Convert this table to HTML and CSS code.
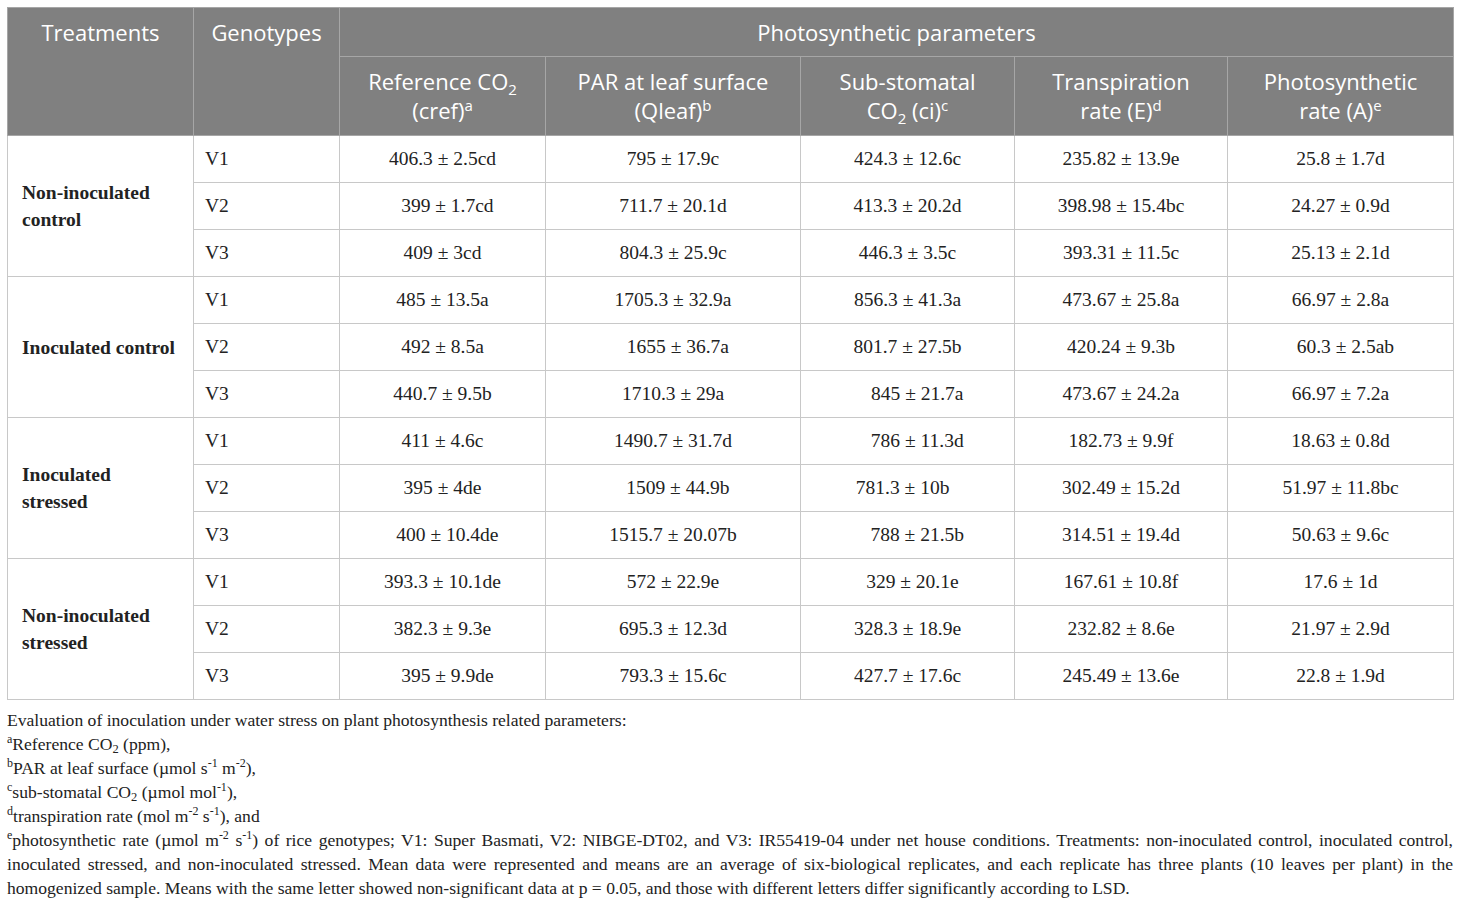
FILE: index.html
```html
<!DOCTYPE html>
<html lang="en">
<head>
    <meta charset="UTF-8">
    <title>Photosynthetic parameters</title>
    <link rel="stylesheet" href="styles.css">
</head>
<body>
    <div class="wrap">
        <table class="data-table">
            <colgroup>
                <col class="c-treat">
                <col class="c-geno">
                <col class="c-ref">
                <col class="c-par">
                <col class="c-sub">
                <col class="c-trans">
                <col class="c-photo">
            </colgroup>
            <thead>
                <tr class="head-top">
                    <th rowspan="2">Treatments</th>
                    <th rowspan="2">Genotypes</th>
                    <th colspan="5">Photosynthetic parameters</th>
                </tr>
                <tr class="head-sub">
                    <th>Reference CO<sub>2</sub><br>(cref)<sup>a</sup></th>
                    <th>PAR at leaf surface<br>(Qleaf)<sup>b</sup></th>
                    <th>Sub-stomatal<br>CO<sub>2</sub> (ci)<sup>c</sup></th>
                    <th>Transpiration<br>rate (E)<sup>d</sup></th>
                    <th>Photosynthetic<br>rate (A)<sup>e</sup></th>
                </tr>
            </thead>
            <tbody>
                <tr>
                    <td class="treat" rowspan="3">Non-inoculated<br>control</td>
                    <td class="geno">V1</td>
                    <td>406.3 ± 2.5cd</td>
                    <td>795 ± 17.9c</td>
                    <td>424.3 ± 12.6c</td>
                    <td>235.82 ± 13.9e</td>
                    <td>25.8 ± 1.7d</td>
                </tr>
                <tr>
                    <td class="geno">V2</td>
                    <td>&nbsp;&nbsp;399 ± 1.7cd</td>
                    <td>711.7 ± 20.1d</td>
                    <td>413.3 ± 20.2d</td>
                    <td>398.98 ± 15.4bc</td>
                    <td>24.27 ± 0.9d</td>
                </tr>
                <tr>
                    <td class="geno">V3</td>
                    <td>409 ± 3cd</td>
                    <td>804.3 ± 25.9c</td>
                    <td>446.3 ± 3.5c</td>
                    <td>393.31 ± 11.5c</td>
                    <td>25.13 ± 2.1d</td>
                </tr>
                <tr>
                    <td class="treat" rowspan="3">Inoculated control</td>
                    <td class="geno">V1</td>
                    <td>485 ± 13.5a</td>
                    <td>1705.3 ± 32.9a</td>
                    <td>856.3 ± 41.3a</td>
                    <td>473.67 ± 25.8a</td>
                    <td>66.97 ± 2.8a</td>
                </tr>
                <tr>
                    <td class="geno">V2</td>
                    <td>492 ± 8.5a</td>
                    <td>&nbsp;&nbsp;1655 ± 36.7a</td>
                    <td>801.7 ± 27.5b</td>
                    <td>420.24 ± 9.3b</td>
                    <td>&nbsp;&nbsp;60.3 ± 2.5ab</td>
                </tr>
                <tr>
                    <td class="geno">V3</td>
                    <td>440.7 ± 9.5b</td>
                    <td>1710.3 ± 29a</td>
                    <td>&nbsp;&nbsp;&nbsp;&nbsp;845 ± 21.7a</td>
                    <td>473.67 ± 24.2a</td>
                    <td>66.97 ± 7.2a</td>
                </tr>
                <tr>
                    <td class="treat" rowspan="3">Inoculated<br>stressed</td>
                    <td class="geno">V1</td>
                    <td>411 ± 4.6c</td>
                    <td>1490.7 ± 31.7d</td>
                    <td>&nbsp;&nbsp;&nbsp;&nbsp;786 ± 11.3d</td>
                    <td>182.73 ± 9.9f</td>
                    <td>18.63 ± 0.8d</td>
                </tr>
                <tr>
                    <td class="geno">V2</td>
                    <td>395 ± 4de</td>
                    <td>&nbsp;&nbsp;1509 ± 44.9b</td>
                    <td>781.3 ± 10b&nbsp;&nbsp;</td>
                    <td>302.49 ± 15.2d</td>
                    <td>51.97 ± 11.8bc</td>
                </tr>
                <tr>
                    <td class="geno">V3</td>
                    <td>&nbsp;&nbsp;400 ± 10.4de</td>
                    <td>1515.7 ± 20.07b</td>
                    <td>&nbsp;&nbsp;&nbsp;&nbsp;788 ± 21.5b</td>
                    <td>314.51 ± 19.4d</td>
                    <td>50.63 ± 9.6c</td>
                </tr>
                <tr>
                    <td class="treat" rowspan="3">Non-inoculated<br>stressed</td>
                    <td class="geno">V1</td>
                    <td>393.3 ± 10.1de</td>
                    <td>572 ± 22.9e</td>
                    <td>&nbsp;&nbsp;329 ± 20.1e</td>
                    <td>167.61 ± 10.8f</td>
                    <td>17.6 ± 1d</td>
                </tr>
                <tr>
                    <td class="geno">V2</td>
                    <td>382.3 ± 9.3e</td>
                    <td>695.3 ± 12.3d</td>
                    <td>328.3 ± 18.9e</td>
                    <td>232.82 ± 8.6e</td>
                    <td>21.97 ± 2.9d</td>
                </tr>
                <tr>
                    <td class="geno">V3</td>
                    <td>&nbsp;&nbsp;395 ± 9.9de</td>
                    <td>793.3 ± 15.6c</td>
                    <td>427.7 ± 17.6c</td>
                    <td>245.49 ± 13.6e</td>
                    <td>22.8 ± 1.9d</td>
                </tr>
            </tbody>
        </table>

        <div class="notes">
            <p>Evaluation of inoculation under water stress on plant photosynthesis related parameters:</p>
            <p><sup>a</sup>Reference CO<sub>2</sub> (ppm),</p>
            <p><sup>b</sup>PAR at leaf surface (µmol s<sup>-1</sup> m<sup>-2</sup>),</p>
            <p><sup>c</sup>sub-stomatal CO<sub>2</sub> (µmol mol<sup>-1</sup>),</p>
            <p><sup>d</sup>transpiration rate (mol m<sup>-2</sup> s<sup>-1</sup>), and</p>
            <p class="long"><sup>e</sup>photosynthetic rate (µmol m<sup>-2</sup> s<sup>-1</sup>) of rice genotypes; V1: Super Basmati, V2: NIBGE-DT02, and V3: IR55419-04 under net house conditions. Treatments: non-inoculated control, inoculated control, inoculated stressed, and non-inoculated stressed. Mean data were represented and means are an average of six-biological replicates, and each replicate has three plants (10 leaves per plant) in the homogenized sample. Means with the same letter showed non-significant data at p = 0.05, and those with different letters differ significantly according to LSD.</p>
        </div>
    </div>
</body>
</html>
```

FILE: styles.css
```css
body {
    margin: 0;
    padding: 7px;
    background-color: #fff;
    color: #222;
    font-family: "Liberation Serif", "Times New Roman", serif;
}

.wrap {
    width: 1446px;
}

.data-table {
    width: 1446px;
    border-collapse: collapse;
    table-layout: fixed;
    font-size: 19.5px;
}

.c-treat { width: 186px; }
.c-geno { width: 146px; }
.c-ref { width: 206px; }
.c-par { width: 255px; }
.c-sub { width: 214px; }
.c-trans { width: 213px; }
.c-photo { width: 226px; }

.data-table th {
    background-color: #808080;
    color: #fff;
    font-family: "Open Sans", "Liberation Sans", sans-serif;
    font-weight: normal;
    font-size: 22px;
    line-height: 29px;
    border: 1px solid #a6a6a6;
    text-align: center;
    vertical-align: top;
}

.head-top th {
    height: 49px;
    padding: 10px 4px 0;
    box-sizing: border-box;
}

.head-sub th {
    height: 79px;
    padding: 10px 4px 0;
    box-sizing: border-box;
}

.data-table th sub,
.data-table th sup {
    font-size: 15px;
    line-height: 0;
}

.data-table th sub {
    vertical-align: -5px;
}

.data-table th sup {
    vertical-align: 8px;
}

.data-table td {
    border: 1px solid #c8c8c8;
    height: 46px;
    padding: 0 6px;
    text-align: center;
    vertical-align: middle;
    white-space: nowrap;
}

.data-table td.geno {
    text-align: left;
    padding-left: 11px;
}

.data-table td.treat {
    text-align: left;
    font-weight: bold;
    padding-left: 14px;
    line-height: 27px;
    white-space: normal;
}

.notes {
    margin-top: 8px;
    font-size: 17.6px;
    line-height: 24px;
    color: #222;
}

.notes p {
    margin: 0;
}

.notes .long {
    text-align: justify;
}

.notes sup {
    font-size: 12px;
    line-height: 0;
    vertical-align: 7px;
}

.notes sub {
    font-size: 12.5px;
    line-height: 0;
    vertical-align: -3px;
}
```
